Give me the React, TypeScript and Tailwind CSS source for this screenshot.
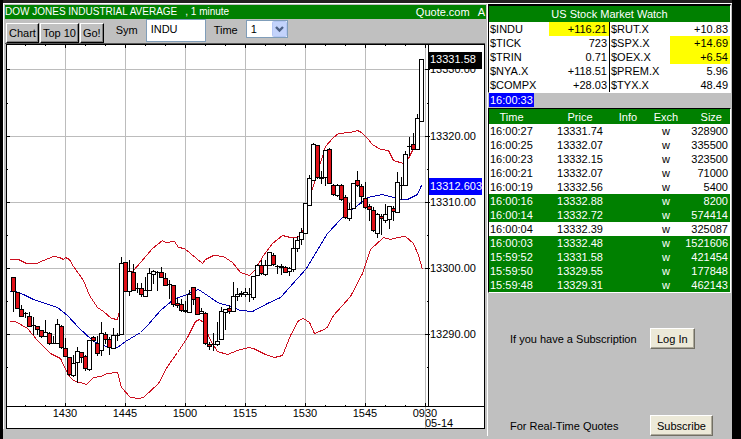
import type { ReactNode } from 'react';

type Quote = { symbol: string; value: string; hot?: boolean };
type Trade = { time: string; price: string; exch: string; size: string; up?: boolean };
type Kind = 'up' | 'down';

const watch: [Quote, Quote][] = [
  [{ symbol: '$INDU', value: '+116.21', hot: true }, { symbol: '$RUT.X', value: '+10.83' }],
  [{ symbol: '$TICK', value: '723' }, { symbol: '$SPX.X', value: '+14.69', hot: true }],
  [{ symbol: '$TRIN', value: '0.71' }, { symbol: '$OEX.X', value: '+6.54', hot: true }],
  [{ symbol: '$NYA.X', value: '+118.51' }, { symbol: '$PREM.X', value: '5.96' }],
  [{ symbol: '$COMPX', value: '+28.03' }, { symbol: '$TYX.X', value: '48.49' }],
];

const trades: Trade[] = [
  { time: '16:00:27', price: '13331.74', exch: 'w', size: '328900' },
  { time: '16:00:25', price: '13332.07', exch: 'w', size: '335500' },
  { time: '16:00:23', price: '13332.15', exch: 'w', size: '323500' },
  { time: '16:00:21', price: '13332.07', exch: 'w', size: '71000' },
  { time: '16:00:19', price: '13332.56', exch: 'w', size: '5400' },
  { time: '16:00:16', price: '13332.88', exch: 'w', size: '8200', up: true },
  { time: '16:00:14', price: '13332.72', exch: 'w', size: '574414', up: true },
  { time: '16:00:04', price: '13332.39', exch: 'w', size: '325087' },
  { time: '16:00:03', price: '13332.48', exch: 'w', size: '1521606', up: true },
  { time: '15:59:52', price: '13331.58', exch: 'w', size: '421454', up: true },
  { time: '15:59:50', price: '13329.55', exch: 'w', size: '177848', up: true },
  { time: '15:59:48', price: '13329.31', exch: 'w', size: '462143', up: true },
];

// one candle per minute: high, body top, body bottom, low
const candles: [number, number, number, number, Kind][] = [
  [277, 277, 291, 311, 'down'], [292, 292, 308, 308, 'down'], [305, 309, 316, 316, 'down'],
  [312, 313, 313, 317, 'up'], [312, 316, 326, 326, 'down'], [317, 325, 325, 334, 'up'],
  [326, 326, 329, 334, 'down'], [330, 330, 336, 337, 'down'], [320, 332, 336, 336, 'up'],
  [332, 333, 343, 344, 'down'], [336, 343, 343, 343, 'up'], [319, 324, 343, 343, 'up'],
  [325, 326, 347, 348, 'down'], [338, 348, 356, 356, 'down'], [357, 357, 374, 375, 'down'],
  [355, 363, 375, 376, 'up'], [347, 351, 362, 382, 'up'], [352, 352, 357, 362, 'down'],
  [355, 356, 368, 370, 'down'], [340, 340, 369, 370, 'up'], [336, 337, 340, 341, 'down'],
  [336, 343, 353, 355, 'down'], [322, 333, 350, 355, 'up'], [332, 334, 339, 343, 'down'],
  [337, 339, 347, 354, 'down'], [328, 335, 348, 348, 'up'], [333, 335, 335, 340, 'up'],
  [257, 263, 334, 334, 'up'], [262, 262, 291, 291, 'down'], [260, 271, 291, 295, 'up'],
  [264, 272, 290, 290, 'down'], [283, 288, 288, 292, 'up'], [283, 288, 294, 296, 'down'],
  [277, 290, 296, 296, 'up'], [268, 273, 290, 290, 'up'], [270, 271, 274, 283, 'up'],
  [271, 272, 272, 290, 'up'], [267, 272, 277, 277, 'down'], [273, 278, 285, 285, 'down'],
  [280, 284, 284, 298, 'up'], [285, 285, 304, 306, 'down'], [298, 303, 305, 307, 'down'],
  [299, 304, 310, 311, 'down'], [301, 310, 311, 312, 'up'], [290, 294, 312, 312, 'up'],
  [287, 287, 299, 304, 'down'], [297, 297, 314, 314, 'down'], [308, 311, 313, 313, 'up'],
  [312, 313, 343, 344, 'down'], [342, 344, 346, 349, 'down'], [333, 344, 344, 350, 'up'],
  [322, 341, 344, 345, 'up'], [307, 311, 339, 339, 'up'], [309, 309, 312, 329, 'up'],
  [305, 308, 311, 313, 'down'], [282, 296, 311, 311, 'up'], [288, 294, 296, 300, 'up'],
  [291, 293, 294, 296, 'up'], [288, 292, 294, 296, 'up'], [288, 294, 294, 301, 'up'],
  [276, 276, 297, 299, 'up'], [264, 265, 275, 275, 'up'], [260, 265, 273, 274, 'down'],
  [260, 265, 274, 275, 'up'], [252, 252, 265, 265, 'up'], [253, 255, 264, 265, 'down'],
  [265, 266, 266, 273, 'up'], [264, 266, 267, 274, 'up'], [266, 267, 272, 272, 'down'],
  [267, 268, 271, 275, 'up'], [238, 248, 269, 271, 'up'], [236, 240, 248, 251, 'up'],
  [228, 232, 239, 244, 'up'], [203, 203, 233, 233, 'up'], [175, 178, 205, 205, 'up'],
  [143, 144, 180, 180, 'up'], [145, 145, 177, 178, 'down'], [171, 177, 178, 183, 'up'],
  [150, 150, 177, 185, 'up'], [148, 149, 183, 183, 'down'], [184, 185, 194, 195, 'down'],
  [184, 185, 195, 196, 'up'], [184, 185, 199, 200, 'down'], [195, 197, 217, 218, 'down'],
  [203, 209, 218, 220, 'up'], [183, 183, 208, 208, 'up'], [171, 180, 185, 186, 'down'],
  [184, 186, 196, 203, 'down'], [182, 198, 207, 208, 'down'], [204, 206, 209, 220, 'down'],
  [207, 210, 230, 231, 'down'], [213, 214, 233, 237, 'up'], [214, 216, 218, 234, 'down'],
  [204, 214, 220, 222, 'up'], [206, 206, 219, 228, 'up'], [206, 208, 211, 220, 'down'],
  [172, 182, 212, 212, 'up'], [177, 185, 185, 199, 'up'], [151, 154, 185, 185, 'up'],
  [137, 146, 146, 155, 'up'], [133, 144, 149, 149, 'down'], [114, 118, 149, 149, 'up'],
  [59, 59, 121, 121, 'up'],
];

const upperBand =
  '9,259 18,259 26,263 36,263 43,260 53,256 59,257 63,259 65,257 69,259 73,266 83,280 89,295 97,307 103,311 111,318 117,319 119,310 121,290 133,270 140,262 152,248 162,240 165,242 174,241 178,247 184,248 190,253 202,263 205,259 213,255 223,256 232,262 240,272 249,275 255,269 263,255 272,243 282,235 290,237 297,237 302,232 307,205 312,188 321,159 325,146 332,138 338,133 350,132 357,130 361,132 367,138 372,144 380,149 388,150 393,160 403,163 408,158 412,150 414,146';
const average =
  '9,291 15,291 23,294 33,299 57,307 67,315 78,327 92,340 100,345 117,347 125,341 140,332 147,325 160,310 173,299 184,295 198,289 210,297 217,302 230,306 240,310 252,311 267,303 280,297 306,268 315,253 327,233 340,219 357,205 367,197 382,194 393,197 400,199 407,199 417,194 421,185';
const lowerBand =
  '9,321 15,321 27,328 37,340 50,353 60,358 68,375 73,380 86,384 93,377 100,376 107,373 117,372 121,387 130,397 138,398 143,397 158,383 167,366 177,352 187,337 195,321 199,319 203,322 210,340 217,351 227,354 237,350 248,347 253,348 265,354 274,357 282,355 290,335 298,320 303,318 309,322 314,333 326,328 333,315 350,296 362,273 370,249 383,237 390,239 397,237 405,236 413,243 418,255 422,269';

const priceLines = [
  { y: 69, label: '13330.00' },
  { y: 136, label: '13320.00' },
  { y: 202, label: '13310.00' },
  { y: 268, label: '13300.00' },
  { y: 334, label: '13290.00' },
];
const halfPrices = [103, 169, 235, 301, 367];
const timeLines = [
  { x: 65, label: '1430' },
  { x: 125, label: '1445' },
  { x: 185, label: '1500' },
  { x: 245, label: '1515' },
  { x: 305, label: '1530' },
  { x: 365, label: '1545' },
  { x: 425, label: '0930' },
];
const minorTimes = [25, 45, 85, 105, 145, 165, 205, 225, 265, 285, 325, 345, 385, 405];

function Chart() {
  return (
    <svg
      viewBox="5 43 481 386"
      className="block w-full"
      role="img"
      aria-label="Dow Jones Industrial Average, 1 minute"
      fontSize="11"
      shapeRendering="crispEdges"
    >
      <rect x="5" y="43" width="481" height="386" fill="#c0c0c0" />
      <rect x="5" y="43" width="480" height="1" fill="#555555" />
      <rect x="6.5" y="44.5" width="478" height="384" fill="#ffffff" stroke="#000000" />

      {/* Grid */}
      {priceLines.map(({ y }) => (
        <rect key={y} x="7" y={y} width="421" height="1" fill="#bcbcbc" />
      ))}
      {timeLines.map(({ x }) => (
        <rect key={x} x={x} y="45" width="1" height={x === 425 ? 383 : 361} fill="#bcbcbc" />
      ))}

      {/* Axes and ticks */}
      <path d="M7 406.5H484M428.5 45V406" stroke="#000000" />
      {priceLines.map(({ y }) => (
        <path key={y} d={`M7 ${y + 0.5}h3M425 ${y + 0.5}h5`} stroke="#000000" />
      ))}
      {halfPrices.map((y) => (
        <path key={y} d={`M7 ${y + 0.5}h1M427 ${y + 0.5}h1`} stroke="#000000" />
      ))}
      {timeLines.map(({ x }) => (
        <path key={x} d={`M${x + 0.5} 45v3M${x + 0.5} 403v3`} stroke="#000000" />
      ))}
      {minorTimes.map((x) => (
        <path key={x} d={`M${x + 0.5} 45v1M${x + 0.5} 405v1`} stroke="#000000" />
      ))}

      {/* Bands */}
      <g fill="none" transform="translate(0.5 0.5)">
        <polyline points={upperBand} stroke="#cc1020" />
        <polyline points={average} stroke="#0000b0" />
        <polyline points={lowerBand} stroke="#cc1020" />
      </g>

      {/* Candles */}
      {candles.map(([high, top, bottom, low, kind], i) => {
        const x = 13 + i * 4;
        return (
          <g key={x}>
            <rect x={x} y={high} width="1" height={low - high + 1} fill="#000000" />
            {bottom - top < 2 ? (
              <rect x={x - 2} y={top} width="5" height={bottom - top + 1} fill="#000000" />
            ) : (
              <rect
                x={x - 1.5}
                y={top + 0.5}
                width="4"
                height={bottom - top}
                fill={kind === 'down' ? '#e01018' : '#ffffff'}
                stroke="#000000"
              />
            )}
          </g>
        );
      })}

      {/* Labels */}
      {priceLines.map(({ y, label }) => (
        <text key={y} x="430" y={y + 4}>
          {label}
        </text>
      ))}
      {timeLines.map(({ x, label }) => (
        <text key={x} x={x} y="417" textAnchor="middle">
          {label}
        </text>
      ))}
      <text x="425" y="427">05-14</text>
      <rect x="429" y="52" width="53" height="17" fill="#000000" />
      <text x="430" y="63" fill="#ffffff">13331.58</text>
      <rect x="429" y="178" width="53" height="17" fill="#0000ff" />
      <text x="430" y="190" fill="#ffffff">13312.603</text>
    </svg>
  );
}

function ToolButton({ children }: { children: ReactNode }) {
  return (
    <button
      type="button"
      className="h-5 border border-t-white border-l-white border-r-black border-b-black bg-[#c0c0c0] px-0.5 shadow-[inset_-1px_-1px_0_#808080]"
    >
      {children}
    </button>
  );
}

function Toolbar() {
  return (
    <form className="flex h-6 items-start bg-[#c0c0c0]">
      <div className="flex gap-px pt-1 pl-px">
        <ToolButton>Chart</ToolButton>
        <ToolButton>Top 10</ToolButton>
        <ToolButton>Go!</ToolButton>
      </div>
      <label htmlFor="symbol" className="pt-1 pr-2 pl-3">
        Sym
      </label>
      <input
        id="symbol"
        defaultValue="INDU"
        className="h-[23px] w-15 border border-[#7f9db9] bg-white px-1 pb-1 outline-none"
      />
      <label htmlFor="interval" className="px-2 pt-1">
        Time
      </label>
      <div className="relative mt-px">
        <select
          id="interval"
          defaultValue="1"
          className="block h-[18px] w-[42px] appearance-none border border-[#7f9db9] bg-white px-1 outline-none"
        >
          <option>1</option>
          <option>5</option>
          <option>15</option>
        </select>
        <svg
          viewBox="0 0 15 16"
          className="pointer-events-none absolute top-px right-px h-4 w-[15px]"
          aria-hidden="true"
        >
          <rect x="0.5" y="0.5" width="14" height="15" rx="1" fill="#c3d3fb" stroke="#b4c6f4" />
          <path d="M4 6l3.5 3.5L11 6" fill="none" stroke="#4d6185" strokeWidth="2.4" />
        </svg>
      </div>
    </form>
  );
}

function QuoteCells({ quote }: { quote: Quote }) {
  return (
    <>
      <th scope="row" className="p-0 pl-px text-left font-normal">
        {quote.symbol}
      </th>
      <td className={quote.hot ? 'bg-[#ffff00] p-0 pr-0.5 text-right' : 'p-0 pr-0.5 text-right'}>
        {quote.value}
      </td>
    </>
  );
}

function MarketWatch() {
  return (
    <table className="w-full table-fixed border-collapse bg-white leading-[14px]">
      <caption className="bg-[#008000] pt-px pb-px text-center text-white">
        US Stock Market Watch
      </caption>
      <tbody className="[&_td:nth-child(2)]:border-r [&_td:nth-child(2)]:border-black">
        {watch.map(([left, right]) => (
          <tr key={left.symbol} className="h-[14px]">
            <QuoteCells quote={left} />
            <QuoteCells quote={right} />
          </tr>
        ))}
      </tbody>
    </table>
  );
}

function TimeAndSales() {
  return (
    <table className="w-full table-fixed border-collapse bg-white leading-[14px]">
      <thead className="bg-[#008000] text-white">
        <tr className="h-[15px]">
          <th className="w-[45px] p-0 font-normal">Time</th>
          <th className="p-0 pl-5 font-normal">Price</th>
          <th className="w-[44px] p-0 font-normal">Info</th>
          <th className="w-8 p-0 font-normal">Exch</th>
          <th className="w-12 p-0 pr-2 text-right font-normal">Size</th>
        </tr>
      </thead>
      <tbody>
        {trades.map((trade) => (
          <tr
            key={trade.time}
            className={trade.up ? 'h-[14px] bg-[#008000] text-white' : 'h-[14px]'}
          >
            <td className="p-0 pl-px whitespace-nowrap">{trade.time}</td>
            <td className="p-0 pl-5 text-center">{trade.price}</td>
            <td className="p-0" />
            <td className="p-0 text-center">{trade.exch}</td>
            <td className="p-0 pr-0.5 text-right">{trade.size}</td>
          </tr>
        ))}
      </tbody>
    </table>
  );
}

function Promo({ text, action }: { text: string; action: string }) {
  return (
    <div className="flex items-center pl-[22px]">
      <p className="w-[140px]">{text}</p>
      <button
        type="button"
        className="h-[21px] border border-t-white border-l-white border-r-[#716f64] border-b-[#716f64] bg-[#ece9d8] px-1.5 shadow-[inset_-1px_-1px_0_#aca899]"
      >
        {action}
      </button>
    </div>
  );
}

export default function App() {
  return (
    <div className="flex min-h-screen bg-black pr-[9px] pl-[3px] font-['Liberation_Sans',Arial,sans-serif] text-[11px] leading-[14px] text-black">
      <main className="min-w-0 flex-1 border-t-3 border-[#231f20] bg-[#c0c0c0]">
        <div className="border-t border-l border-white pt-px pr-px pl-px">
          <header className="flex justify-between bg-[#008000] pr-px text-white">
            <h1 className="flex gap-2 text-[10px]">
              <span>DOW JONES INDUSTRIAL AVERAGE</span>
              <span>, 1 minute</span>
            </h1>
            <p className="flex gap-2">
              <span>Quote.com</span>
              <span>A</span>
            </p>
          </header>
          <Toolbar />
          <Chart />
        </div>
      </main>

      <aside className="w-[245px] shrink-0 border-t-3 border-[#231f20] bg-[#c0c0c0]">
        <div className="border-t border-l border-white pr-px">
          <section className="border border-t-2 border-black border-r-white border-b-white">
            <MarketWatch />
          </section>
          <div className="flex pb-px pl-px">
            <time className="bg-[#0000ff] px-px text-white">16:00:33</time>
          </div>
          <section className="border border-black border-r-white border-b-white">
            <TimeAndSales />
          </section>
          <div className="flex flex-col gap-[66px] pt-[35px]">
            <Promo text="If you have a Subscription" action="Log In" />
            <Promo text="For Real-Time Quotes" action="Subscribe" />
          </div>
        </div>
      </aside>
    </div>
  );
}
